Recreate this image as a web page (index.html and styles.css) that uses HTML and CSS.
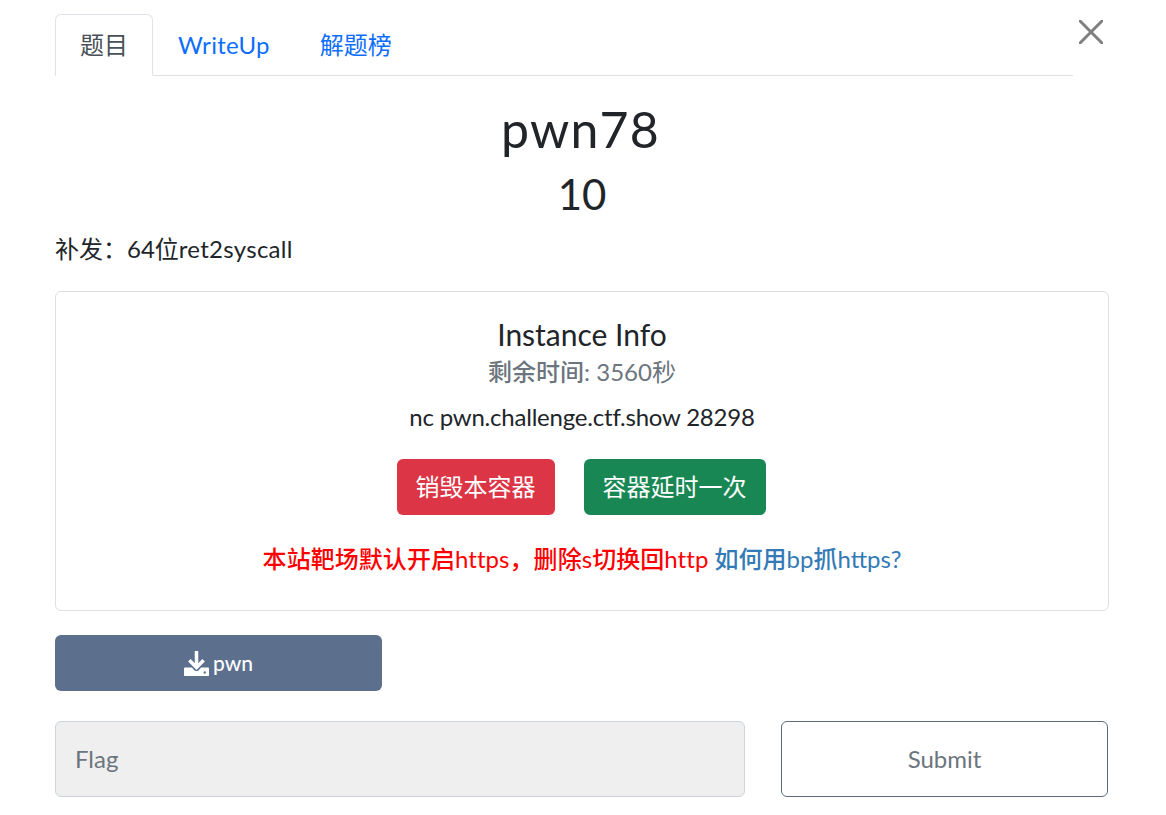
FILE: index.html
```html
<!DOCTYPE html>
<html lang="zh">
<head>
<meta charset="utf-8">
<title>pwn78</title>
<link rel="stylesheet" href="styles.css">
</head>
<body>
<div class="modal">
  <div class="head">
    <ul class="tabs">
      <li class="tab active">题目</li>
      <li class="tab wide">WriteUp</li>
      <li class="tab">解题榜</li>
    </ul>
    <button class="close" aria-label="Close">
      <svg width="24" height="24" viewBox="0 0 24 24"><path d="M1 1L23 23M23 1L1 23" fill="none" stroke="#7f7f7f" stroke-width="3" stroke-linecap="round"/></svg>
    </button>
  </div>
  <h1 class="title">pwn78</h1>
  <h2 class="value">10</h2>
  <p class="desc">补发：64位<span class="wide">ret2syscall</span></p>
  <div class="card">
    <h3 class="card-title">Instance Info</h3>
    <h4 class="remain"><span class="med">剩余时间</span>: 3560<span>秒</span></h4>
    <p class="addr">nc pwn.challenge.ctf.show 28298</p>
    <div class="actions">
      <button class="btn danger">销毁本容器</button>
      <button class="btn success">容器延时一次</button>
    </div>
    <p class="note"><span class="red"><span class="med">本站靶场默认开启</span>https<span class="med">，删除</span>s<span class="med">切换回</span>http</span> <a class="link"><span class="med">如何用</span>bp<span class="med">抓</span>https?</a></p>
  </div>
  <div class="files">
    <button class="file">
      <svg class="dl" width="25" height="25" viewBox="0 0 512 512"><path fill="none" stroke="#fff" stroke-width="72" d="M256 0V330M110 190L256 336L402 190"/><path fill="#fff" d="M16 340H160L212 392c24 24 64 24 88 0L352 340H496c10 0 16 6 16 16V496c0 10-6 16-16 16H16c-10 0-16-6-16-16V356c0-10 6-16 16-16z"/><circle cx="425" cy="440" r="24" fill="#5c708e"/></svg>
      <span>pwn</span>
    </button>
  </div>
  <div class="submit-row">
    <input class="flag" placeholder="Flag">
    <button class="submit">Submit</button>
  </div>
</div>
</body>
</html>
```
FILE: styles.css
```css
* { box-sizing: border-box; }
html, body { margin: 0; background: #fff; }
body {
  font-family: Lato, "Noto Sans CJK SC", sans-serif;
  font-size: 24px;
  line-height: 36px;
  color: #212529;
}
.modal { padding: 14px 57px 0 55px; }
.head { display: flex; }
.tabs {
  flex: 1;
  display: flex;
  list-style: none;
  margin: 0;
  padding: 0;
  height: 62px;
  border-bottom: 1px solid #dee2e6;
}
.tab {
  padding: 12px 24px;
  height: 62px;
  border: 1px solid transparent;
  border-radius: 6px 6px 0 0;
  color: #0d6efd;
}
.tab.active {
  color: #495057;
  background: #fff;
  border-color: #dee2e6 #dee2e6 #fff;
}
.wide { letter-spacing: .28px; }
.close {
  width: 36px;
  padding: 0;
  border: 0;
  background: none;
  height: 36px;
  display: flex;
  align-items: center;
  justify-content: center;
}
.title {
  margin: 21px 0 0;
  padding-right: 3px;
  text-align: center;
  font-weight: 400;
  font-size: 50px;
  line-height: 65px;
  letter-spacing: 1.25px;
}
.value {
  margin: 0;
  text-align: center;
  font-weight: 400;
  font-size: 42px;
  line-height: 50px;
  padding-top: 7px;
}
.desc { margin: 12px 0 0; }
.card {
  margin-top: 24px;
  height: 320px;
  border: 1px solid #dfdfdf;
  border-radius: 6px;
  padding: 24px 24px 0;
  text-align: center;
}
.card-title { margin: 0; font-weight: 400; font-size: 30px; line-height: 36px; }
.remain { margin: 2px 0 0; font-weight: 400; font-size: 24px; line-height: 36px; color: #6c757d; }
.med { font-weight: 500; }
.addr { margin: 9px 0 0; letter-spacing: -.21px; }
.actions { display: flex; justify-content: center; gap: 29px; margin-top: 24px; padding-right: 2px; }
.btn {
  font: inherit;
  height: 56px;
  padding: 0 19px;
  color: #fff;
  border: 0;
  border-radius: 6px;
}
.danger { background: #dc3545; }
.success { background: #198754; }
.note { margin: 26px 0 0; }
.red { color: #f00; letter-spacing: .05px; }
.link { color: #337ab7; }
.files { margin-top: 24px; }
.file {
  font: inherit;
  font-size: 21px;
  font-weight: 500;
  width: 327px;
  height: 56px;
  background: #5c708e;
  color: #fff;
  border: 0;
  border-radius: 6px;
  display: flex;
  align-items: center;
  justify-content: center;
  gap: 4px;
}
.submit-row { display: flex; justify-content: space-between; margin-top: 30px; padding-right: 1px; }
.flag {
  font: inherit;
  width: 690px;
  height: 76px;
  padding: 0 19px 2px;
  background: #efefef;
  border: 1px solid #ced4da;
  border-radius: 6px;
  color: #495057;
}
.flag::placeholder { color: #6c757d; opacity: 1; }
.submit {
  font: inherit;
  width: 327px;
  height: 76px;
  background: #fff;
  color: #6c757d;
  border: 1px solid #5c6b7f;
  border-radius: 6px;
}
```
